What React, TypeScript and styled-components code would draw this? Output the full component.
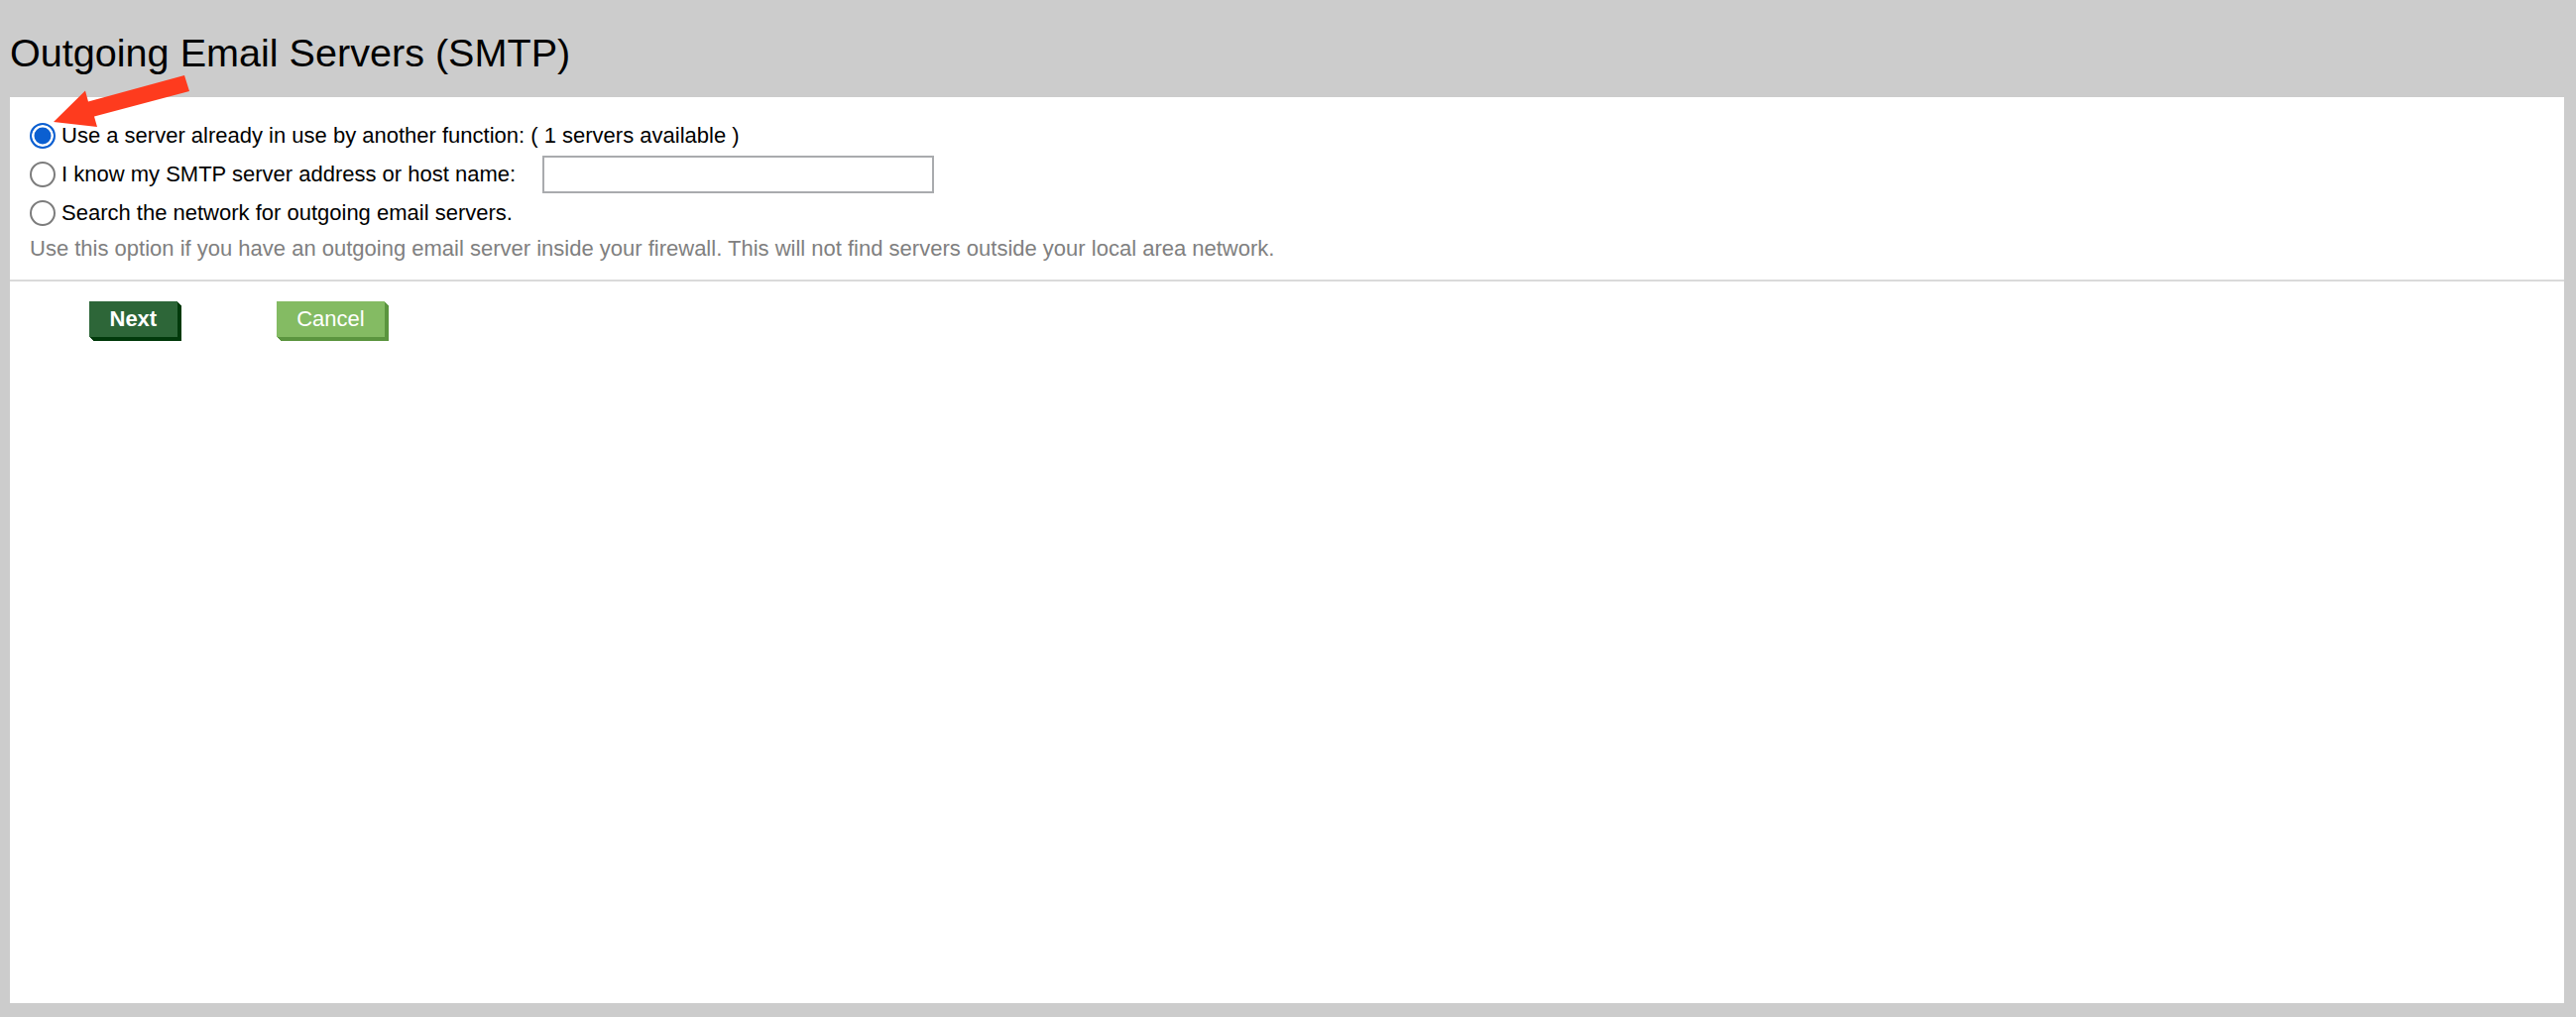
import React, { useState } from "react";
import styled, { createGlobalStyle, css } from "styled-components";

const GlobalStyle = createGlobalStyle`
  html,
  body {
    margin: 0;
    padding: 0;
    background: #cccccc;
  }
  body {
    font-family: "Liberation Sans", Arial, Helvetica, sans-serif;
  }
`;

const Page = styled.div`
  position: relative;
  min-height: 100vh;
  box-sizing: border-box;
  display: flex;
  flex-direction: column;
  padding: 0 12px 14px 10px;
`;

const Title = styled.h1`
  margin: 0;
  padding: 31px 0 22px 0;
  font-size: 39.6px;
  font-weight: normal;
  line-height: 45px;
  color: #000;
`;

const Panel = styled.div`
  flex: 1;
  background: #fff;
  display: flex;
  flex-direction: column;
`;

const Options = styled.div`
  display: flex;
  flex-direction: column;
  padding: 26px 20px 18px;
  border-bottom: 2px solid #dadada;
`;

const OptionList = styled.div`
  display: flex;
  flex-direction: column;
  gap: 7px;
`;

const OptionRow = styled.label`
  display: flex;
  align-items: center;
  min-height: 26px;
  font-size: 22px;
  line-height: 26px;
  color: #000;
  cursor: pointer;
`;

const Radio = styled.input.attrs({ type: "radio" })`
  appearance: none;
  -webkit-appearance: none;
  flex: none;
  width: 26px;
  height: 26px;
  margin: 0 6px 0 0;
  box-sizing: border-box;
  border-radius: 50%;
  border: 2px solid #7c7c7c;
  background: #fff;
  cursor: pointer;
  &:checked {
    border-color: #0b5fd1;
    background: #0b5fd1;
    box-shadow: inset 0 0 0 2.5px #fff;
  }
`;

const HostInput = styled.input`
  width: 395px;
  height: 38px;
  margin-left: 27px;
  box-sizing: border-box;
  border: 2px solid #a9abae;
  padding: 0 6px;
  font-family: inherit;
  font-size: 20px;
  outline: none;
`;

const Hint = styled.div`
  margin-top: 10px;
  font-size: 22px;
  line-height: 26px;
  color: #808080;
`;

const Actions = styled.div`
  display: flex;
  gap: 100px;
  padding: 20px 0 0 80px;
`;

const stack = (c: string) =>
  [1, 2, 3, 4].map((i) => `${i}px ${i}px 0 ${c}`).join(", ");

const WizardButton = styled.button<{ $primary?: boolean }>`
  height: 36px;
  padding: 0 20.5px;
  border: none;
  font-family: inherit;
  font-size: 22px;
  line-height: 36px;
  color: #fff;
  cursor: pointer;
  ${(p) =>
    p.$primary
      ? css`
          font-weight: bold;
          background: #2d6638;
          box-shadow: ${stack("#013a0b")};
        `
      : css`
          background: #84bb63;
          box-shadow: ${stack("#5b953f")};
        `}
`;

const Annotation = styled.svg`
  position: absolute;
  left: 0;
  top: 0;
  pointer-events: none;
`;

const ArrowMark = () => (
  <Annotation width="200" height="140" viewBox="0 0 200 140">
    <polygon
      points="186,76 191,92 95,117.5 98,128 54,123 86,91.5 89,102.5"
      fill="#fe3b1e"
    />
  </Annotation>
);

type Mode = "existing" | "host" | "search";

const App = () => {
  const [mode, setMode] = useState<Mode>("existing");
  const [host, setHost] = useState("");

  return (
    <Page>
      <GlobalStyle />
      <Title>Outgoing Email Servers (SMTP)</Title>
      <Panel>
        <Options>
          <OptionList>
            <OptionRow>
              <Radio
                name="smtp"
                checked={mode === "existing"}
                onChange={() => setMode("existing")}
              />
              Use a server already in use by another function: ( 1 servers available )
            </OptionRow>
            <OptionRow>
              <Radio
                name="smtp"
                checked={mode === "host"}
                onChange={() => setMode("host")}
              />
              I know my SMTP server address or host name:
              <HostInput
                value={host}
                onChange={(e) => setHost(e.target.value)}
                onFocus={() => setMode("host")}
              />
            </OptionRow>
            <OptionRow>
              <Radio
                name="smtp"
                checked={mode === "search"}
                onChange={() => setMode("search")}
              />
              Search the network for outgoing email servers.
            </OptionRow>
          </OptionList>
          <Hint>
            Use this option if you have an outgoing email server inside your firewall. This will
            not find servers outside your local area network.
          </Hint>
        </Options>
        <Actions>
          <WizardButton $primary>Next</WizardButton>
          <WizardButton>Cancel</WizardButton>
        </Actions>
      </Panel>
      <ArrowMark />
    </Page>
  );
};

export default App;
